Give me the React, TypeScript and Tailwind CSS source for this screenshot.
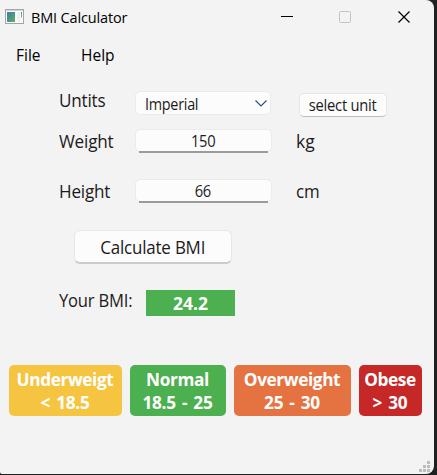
import type { ReactNode } from "react";

function AppIcon() {
  return (
    <svg width="20" height="16" viewBox="0 0 20 16" shapeRendering="crispEdges">
      <defs>
        <linearGradient id="pane" x1="0" y1="0" x2="1" y2="1">
          <stop offset="0" stopColor="#3f7fa0" />
          <stop offset="1" stopColor="#5dac6c" />
        </linearGradient>
        <linearGradient id="strip" x1="0" y1="0" x2="0" y2="1">
          <stop offset="0" stopColor="#4b8aa5" />
          <stop offset="1" stopColor="#8fcf9a" />
        </linearGradient>
      </defs>
      <rect x="0.5" y="0.5" width="18" height="14" fill="#fbfbfb" stroke="#a3a5aa" />
      <rect x="1" y="1" width="17" height="1" fill="#d2d4d8" />
      <rect x="2" y="3" width="8" height="10" fill="url(#pane)" />
      <rect x="12" y="3" width="3" height="10" fill="#eef1f3" />
      <rect x="16" y="3" width="1" height="6" fill="url(#strip)" />
    </svg>
  );
}

function TitleBar() {
  return (
    <header className="flex h-[34px] items-start pl-[5px]">
      <div className="mt-[9px] w-[26px]">
        <AppIcon />
      </div>
      <h1 className="mt-[5px] w-[250px] text-[15px] leading-[25px] text-black">
        <span className="inline-block origin-left scale-x-[0.965] tracking-[-0.15px]">BMI Calculator</span>
      </h1>
      <svg className="mt-[11px]" width="130" height="12" viewBox="0 0 130 12" fill="none">
        <path d="M0 5.5H12" stroke="#000" />
        <rect x="58.5" y="0.5" width="11" height="11" rx="1" stroke="#c3c3c3" />
        <path d="M117.5 0.5L128.5 11.5M128.5 0.5L117.5 11.5" stroke="#000" strokeWidth="1.2" />
      </svg>
    </header>
  );
}

function Label({ children }: { children: ReactNode }) {
  return (
    <span className="w-[77px] pl-[0.5px] text-[18px] leading-[25px] whitespace-nowrap">
      <span className="inline-block origin-left scale-x-[0.95] tracking-[-0.2px]">{children}</span>
    </span>
  );
}

function NumberField({ value }: { value: string }) {
  return (
    <div className="flex h-[25px] w-[137px] flex-col items-center">
      <div className="h-[23px] w-full rounded-[5px] border border-[#ebebeb] bg-[#fcfcfc] pr-px text-center text-[16px] leading-[22px]">
        <span className="inline-block scale-x-[0.92] tracking-[-0.4px]">{value}</span>
      </div>
      <div className="-mt-px h-[2px] w-[129px] bg-[#9b9b9b]" />
    </div>
  );
}

function Category({ className, name, range }: { className: string; name: string; range: string }) {
  return (
    <div className={`h-[51px] rounded-[5px] pt-[3px] pr-px text-center text-[17.5px] leading-[23px] font-bold whitespace-nowrap text-white ${className}`}>
      <div className="scale-x-[0.985] tracking-[-0.4px]">{name}</div>
      <div className="scale-x-[0.985] tracking-[-0.3px] [word-spacing:2px]">{range}</div>
    </div>
  );
}

export default function App() {
  return (
    <div className="h-[475px] w-[437px] overflow-hidden bg-[#202020] font-['Open_Sans','Noto_Sans',sans-serif] text-[#1b1b1b]">
      <div className="flex h-[474px] w-[434px] flex-col rounded-r-[8px] rounded-bl-[2px] bg-[#f3f3f3]">
        <TitleBar />
        <nav className="flex h-[57px] pt-[9px] pl-[16px] text-[15.5px] leading-[25px] text-black">
          <span className="w-[65px]">File</span>
          <span className="inline-block origin-left">Help</span>
        </nav>

        <main className="flex flex-1 flex-col">
          <div className="flex h-[38px] pl-[58px]">
            <div className="-mt-[3px] flex">
              <Label>Untits</Label>
            </div>
            <div className="flex h-[24px] w-[136px] items-center justify-between rounded-[5px] border border-[#ebebeb] bg-[#fcfcfc] pr-[3px] pl-[9px]">
              <span className="mt-[2px] -mr-[4px] inline-block origin-left scale-x-[0.93] text-[15.5px] leading-[22px] tracking-[-0.3px]">Imperial</span>
              <svg className="mt-px" width="12" height="7" viewBox="0 0 12 7" fill="none">
                <path d="M0.5 0.5L6 6L11.5 0.5" stroke="#205080" strokeWidth="1.1" />
              </svg>
            </div>
            <button className="mt-[2px] ml-[28px] h-[24px] w-[88px] rounded-[5px] border border-[#e6e6e6] border-b-[#bdbdbd] bg-[#fcfcfc] pr-px text-[15.5px] leading-[23px] whitespace-nowrap">
              <span className="-mx-[4px] inline-block scale-x-[0.95] tracking-[-0.25px]">select unit</span>
            </button>
          </div>

          <div className="flex h-[50px] pl-[58px]">
            <Label>Weight</Label>
            <NumberField value="150" />
            <span className="ml-[24px] inline-block h-[25px] origin-left scale-x-[0.97] text-[18px] leading-[25px]">kg</span>
          </div>

          <div className="flex h-[51px] pl-[58px]">
            <Label>Height</Label>
            <NumberField value="66" />
            <span className="ml-[24px] inline-block h-[25px] origin-left scale-x-[0.94] text-[18px] leading-[25px]">cm</span>
          </div>

          <div className="h-[60px] pl-[74px]">
            <button className="h-[34px] w-[158px] rounded-[6px] border border-[#e6e6e6] border-b-2 border-b-[#cbcbcb] bg-[#fcfcfc] text-[18px] leading-[33px] whitespace-nowrap">
              <span className="inline-block scale-x-[0.94] tracking-[-0.2px]">Calculate BMI</span>
            </button>
          </div>

          <div className="flex h-[75px] pl-[58px]">
            <div className="-mt-[2px] flex w-[88px] origin-left scale-x-[0.97]">
              <Label>Your BMI:</Label>
            </div>
            <output className="h-[26px] w-[89px] bg-[#4caf50] text-center text-[17.5px] leading-[27px] font-bold text-white">24.2</output>
          </div>

          <div className="flex gap-[8px] pl-[9px]">
            <Category className="w-[113px] bg-[#f5c542]" name="Underweigt" range="< 18.5" />
            <Category className="w-[96px] bg-[#4caf50]" name="Normal" range="18.5 - 25" />
            <Category className="w-[117px] bg-[#e57342]" name="Overweight" range="25 - 30" />
            <Category className="w-[63px] bg-[#c62828]" name="Obese" range="> 30" />
          </div>

          <div className="mt-auto flex justify-end pr-[4px] pb-[2px]">
            <svg width="11" height="11" viewBox="0 0 11 11" fill="#bdbdbd" shapeRendering="crispEdges">
              <path d="M8 0h3v3h-3zM4 4h3v3h-3zM8 4h3v3h-3zM0 8h3v3h-3zM4 8h3v3h-3zM8 8h3v3h-3z" />
            </svg>
          </div>
        </main>
      </div>
    </div>
  );
}
